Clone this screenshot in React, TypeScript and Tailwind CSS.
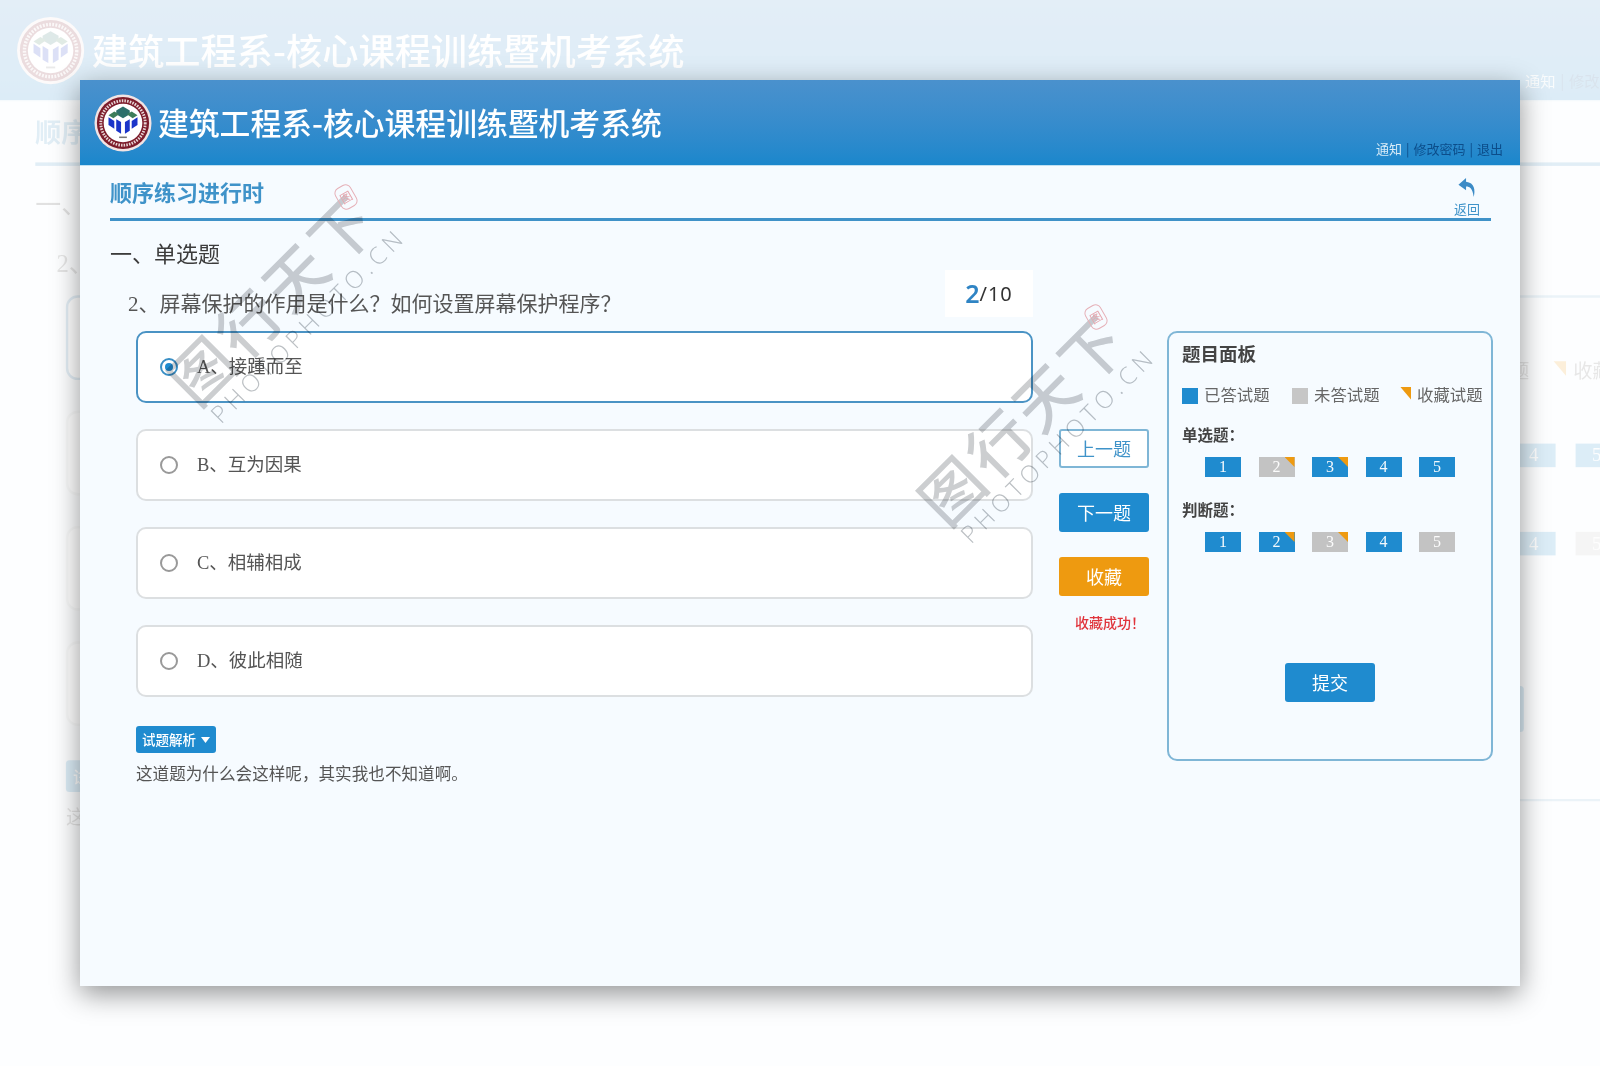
const blue = "bg-[#1f8bcf]";

const singles = [
	{ n: 1, done: true, fav: false },
	{ n: 2, done: false, fav: true },
	{ n: 3, done: true, fav: true },
	{ n: 4, done: true, fav: false },
	{ n: 5, done: true, fav: false },
];

const judges = [
	{ n: 1, done: true, fav: false },
	{ n: 2, done: true, fav: true },
	{ n: 3, done: false, fav: true },
	{ n: 4, done: true, fav: false },
	{ n: 5, done: false, fav: false },
];

const options = ["A、接踵而至", "B、互为因果", "C、相辅相成", "D、彼此相随"];

function Logo() {
	return (
		<svg width="58" height="58" viewBox="0 0 60 60">
			<circle cx="30" cy="30" r="29.5" fill="#f2e4e4" />
			<circle cx="30" cy="30" r="27" fill="#7c1c2b" />
			<circle cx="30" cy="30" r="23" fill="none" stroke="#e8d6d6" strokeWidth="3" strokeDasharray="1.6 1.2" />
			<circle cx="30" cy="30" r="20" fill="#fff" />
			<path d="M30 13 L37 17 L37 21 L30 25 L23 21 L23 17 Z" fill="#2c6f6a" />
			<path d="M21 18 L26 21 L20 25 L15 22 Z" fill="#3d7d5a" />
			<path d="M39 18 L34 21 L40 25 L45 22 Z" fill="#3d7d5a" />
			<path d="M15 24 L21 28 L21 36 L15 32 Z" fill="#1b35c9" />
			<path d="M45 24 L39 28 L39 36 L45 32 Z" fill="#1b35c9" />
			<path d="M23 26 L28 29 L28 41 L23 38 Z" fill="#1b35c9" />
			<path d="M37 26 L32 29 L32 41 L37 38 Z" fill="#1b35c9" />
			<rect x="26" y="44" width="8" height="1.6" fill="#777" />
		</svg>
	);
}

function Tile({ n, done, fav }: { n: number; done: boolean; fav: boolean }) {
	return (
		<div
			className={`relative w-[36px] h-[20px] flex items-center justify-center text-[16px] text-white/95 ${
				done ? blue : "bg-[#c3c3c3]"
			}`}
		>
			{n}
			{fav && (
				<span className="absolute right-0 top-0 w-[10px] h-[10px] bg-[#ee9a10] [clip-path:polygon(0_0,100%_0,100%_100%)]" />
			)}
		</div>
	);
}

function Panel() {
	return (
		<div className="ml-[18px] w-[326px] h-[430px] shrink-0 border-2 border-[#7fb6d6] rounded-[10px] pl-[13px] pt-[10px] flex flex-col">
			<div className="text-[18.5px] leading-[24px] font-bold text-[#444]">题目面板</div>
			<div className="mt-[17px] h-[24px] flex items-center text-[16.4px] text-[#666]">
				<div className="w-[110px] flex items-center gap-[6px]">
					<span className={`w-[16px] h-[16px] ${blue}`} />
					已答试题
				</div>
				<div className="w-[108px] flex items-center gap-[6px]">
					<span className="w-[16px] h-[16px] bg-[#c6c6c6]" />
					未答试题
				</div>
				<div className="flex items-center gap-[6px]">
					<span className="w-[11px] h-[13px] -mt-[6px] bg-[#ee9a10] [clip-path:polygon(0_0,100%_0,100%_100%)]" />
					收藏试题
				</div>
			</div>
			<div className="mt-[17px] text-[15.5px] leading-[22px] font-bold text-[#444]">{"单选题\uFF1A"}</div>
			<div className="mt-[10px] ml-[23px] flex gap-[17.5px]">
				{singles.map((t) => (
					<Tile key={t.n} {...t} />
				))}
			</div>
			<div className="mt-[23px] text-[15.5px] leading-[22px] font-bold text-[#444]">{"判断题\uFF1A"}</div>
			<div className="mt-[10px] ml-[23px] flex gap-[17.5px]">
				{judges.map((t) => (
					<Tile key={t.n} {...t} />
				))}
			</div>
			<button
				className={`mt-[111px] ml-[103px] w-[90px] h-[39px] rounded-[3px] ${blue} text-white text-[18px] font-['Noto_Sans_CJK_SC',sans-serif]`}
			>
				提交
			</button>
		</div>
	);
}

function ExamPage() {
	return (
		<div className="w-[1440px] h-[906px] bg-[#f6fbff] flex flex-col font-['Liberation_Serif','Noto_Sans_CJK_SC',serif]">
			<header className="h-[86px] shrink-0 flex justify-between pl-[14px] pr-[17px] bg-gradient-to-b from-[#4a91cd] to-[#1a87cc] border-b border-[#bfe0f2] font-['Noto_Sans_CJK_SC',sans-serif]">
				<div className="flex items-center gap-[6px]">
					<Logo />
					<h1 className="text-[30.8px] font-medium text-white leading-none">建筑工程系-核心课程训练暨机考系统</h1>
				</div>
				<div className="self-end pb-[6px] text-[13px] leading-[20px] flex items-center gap-[4px] text-[#0c4d8a]">
					<span className="text-[#d8ecf8]">通知</span>
					<span>|</span>
					<span>修改密码</span>
					<span>|</span>
					<span>退出</span>
				</div>
			</header>

			<div className="pl-[30px] pr-[29px] flex-1 flex flex-col">
				<div className="h-[55px] shrink-0 flex justify-between border-b-[3px] border-[#3f92c8]">
					<div className="pt-[9px] text-[22px] leading-[32px] font-bold text-[#3f93c9] font-['Noto_Sans_CJK_SC',sans-serif]">
						顺序练习进行时
					</div>
					<div className="pt-[12px] pr-[11px] flex flex-col items-center">
						<svg width="18" height="20" viewBox="0 0 18 20">
							<path d="M8 0 L0 7 L8 13 V9 C12 9 15 11 16 20 C18 13 17 5 8 4 Z" fill="#3c8bc6" />
						</svg>
						<span className="mt-[3px] text-[13px] leading-[18px] text-[#3f93c9] font-['Noto_Sans_CJK_SC',sans-serif]">
							返回
						</span>
					</div>
				</div>

				<div className="mt-[19px] text-[22px] leading-[30px] text-[#3c3c3c]">一、单选题</div>

				<div className="w-[923px] h-[47px] pl-[18px] flex justify-between items-end">
					<div className="text-[21px] leading-[26px] text-[#555]">
						{"2、屏幕保护的作用是什么\uFF1F如何设置屏幕保护程序\uFF1F"}
					</div>
					<div className="w-[88px] h-[47px] bg-white flex items-center justify-center font-['Noto_Sans','Noto_Sans_CJK_SC',sans-serif]">
						<span className="text-[25px] font-semibold text-[#2f84c4]">2</span>
						<span className="text-[20px] tracking-[1px] text-[#333]">/10</span>
					</div>
				</div>

				<div className="mt-[14px] flex items-start">
					<div className="ml-[26px] w-[897px] shrink-0">
						<div className="flex flex-col gap-[26px]">
							{options.map((o, i) => (
								<div
									key={o}
									className={`h-[72px] bg-white rounded-[10px] border-2 flex items-center pl-[22px] gap-[19px] ${
										i === 0 ? "border-[#4a93c4]" : "border-[#dcdfe1]"
									}`}
								>
									{i === 0 ? (
										<span className="w-[18px] h-[18px] rounded-full border-[2.5px] border-[#3a8fc5] flex items-center justify-center">
											<span className={`w-[8px] h-[8px] rounded-full ${blue}`} />
										</span>
									) : (
										<span className="w-[18px] h-[18px] rounded-full border-2 border-[#999]" />
									)}
									<span className="pt-[2px] text-[18.5px] text-[#555]">{o}</span>
								</div>
							))}
						</div>
						<button
							className={`mt-[29px] w-[80px] h-[27px] rounded-[3px] ${blue} text-white text-[13.5px] font-medium flex items-center justify-center gap-[5px] font-['Noto_Sans_CJK_SC',sans-serif]`}
						>
							试题解析
							<svg width="9" height="6" viewBox="0 0 9 6">
								<path d="M0 0 H9 L4.5 6 Z" fill="#fff" />
							</svg>
						</button>
						<p className="mt-[10px] text-[16.6px] leading-[24px] text-[#555]">
							{"这道题为什么会这样呢\uFF0C其实我也不知道啊。"}
						</p>
					</div>

					<div className="ml-[26px] w-[90px] shrink-0 pt-[98px] flex flex-col gap-[25px] text-[18px] font-['Noto_Sans_CJK_SC',sans-serif]">
						<button className="h-[39px] rounded-[3px] bg-white border-2 border-[#7fb6d6] text-[#3f93c9]">上一题</button>
						<button className={`h-[39px] rounded-[3px] ${blue} text-white`}>下一题</button>
						<button className="h-[39px] rounded-[3px] bg-[#ee9a10] text-white">收藏</button>
						<div className="-mt-[8px] pl-[16px] text-[14px] leading-[18px] font-medium whitespace-nowrap text-[#e0343c]">
							{"收藏成功\uFF01"}
						</div>
					</div>

					<Panel />
				</div>
			</div>
		</div>
	);
}

function Watermark({ className }: { className: string }) {
	return (
		<div className={`absolute w-[300px] h-[300px] pointer-events-none mix-blend-multiply ${className}`}>
			<span className="absolute left-[146px] top-[122px] -translate-x-1/2 -translate-y-1/2 -rotate-45 whitespace-nowrap text-[62px] leading-none font-medium tracking-[4px] text-[#ccced0] font-['Noto_Sans_CJK_SC',sans-serif]">
				图行天下
			</span>
			<span className="absolute left-[183px] top-[150px] -translate-x-1/2 -translate-y-1/2 -rotate-45 whitespace-nowrap text-[24px] leading-none tracking-[5px] text-[#bcc0c4] font-['Open_Sans',sans-serif] font-light">
				PHOTOPHOTO.CN
			</span>
			<span className="absolute left-[212px] top-[10px] w-[18px] h-[24px] -rotate-30 rounded-[6px] border border-[#efb4b8] flex items-center justify-center text-[12px] leading-none text-[#efa9ae] font-['Noto_Sans_CJK_SC',sans-serif]">
				图
			</span>
		</div>
	);
}

export default function App() {
	return (
		<div className="relative w-[1600px] h-[1066px] overflow-hidden bg-white">
			<div className="absolute left-0 top-0 origin-top-left scale-[1.1767] opacity-[0.15] blur-[0.6px]">
				<ExamPage />
			</div>
			<div className="absolute left-[80px] top-[80px] shadow-[0_8px_26px_rgba(0,0,0,0.42)]">
				<ExamPage />
				<Watermark className="left-[45px] top-[95px]" />
				<Watermark className="left-[795px] top-[215px]" />
			</div>
		</div>
	);
}
